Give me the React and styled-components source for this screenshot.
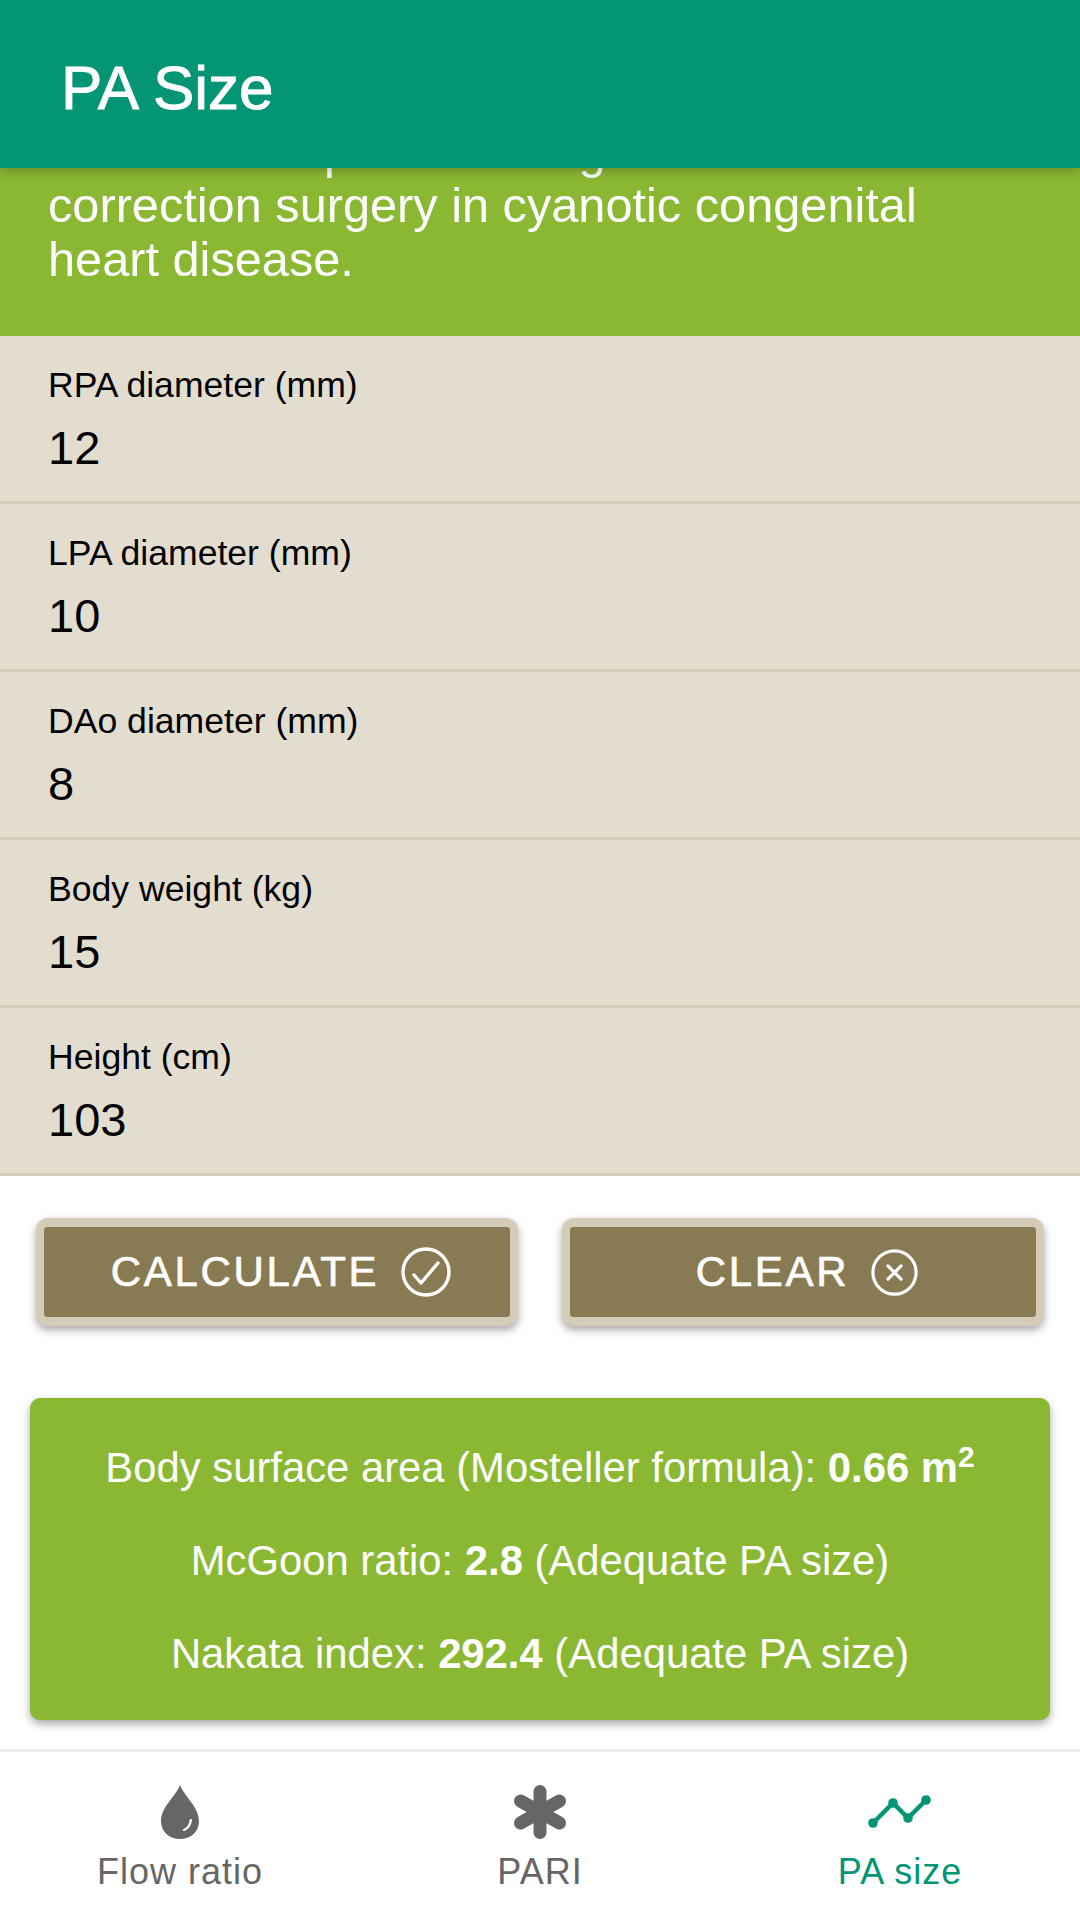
import React from "react";
import styled, { createGlobalStyle } from "styled-components";

const Global = createGlobalStyle`
  html, body { margin: 0; padding: 0; background: #fff; }
  body { font-family: "Liberation Sans", Arial, sans-serif; }
  * { box-sizing: border-box; }
`;
const Page = styled.div`
  width: 1080px; height: 1920px; display: flex; flex-direction: column; overflow: hidden; background: #fff;
`;
const Header = styled.header`
  height: 168px; flex: none; background: #039574; display: flex; align-items: center; padding: 6px 0 0 61px;
  position: relative; z-index: 2; box-shadow: 0 3px 10px rgba(0,0,0,.25);
  color: #fff; font-size: 62px; font-weight: 400; -webkit-text-stroke: 0.9px #fff;
`;
const Intro = styled.section`
  height: 168px; flex: none; background: #8bb833; color: #fff; font-size: 48.7px; line-height: 54px;
  padding: 0 48px 50px; display: flex; flex-direction: column; justify-content: flex-end; overflow: hidden;
`;
const IntroLine = styled.div`
  white-space: nowrap;
`;
const Field = styled.div`
  height: 168px; flex: none; background: #e3ddd0; border-bottom: 3px solid #d3ccb6; padding: 29px 48px 0;
`;
const Label = styled.div`
  font-size: 35.6px; line-height: 40px; color: #000;
`;
const Value = styled.div`
  font-size: 47px; line-height: 54px; color: #000; margin-top: 16px;
`;
const Buttons = styled.div`
  display: flex; justify-content: space-between; padding: 42px 36px 0; flex: none;
`;
const Button = styled.button`
  width: 482px; height: 108px; background: #887a52; border-style: solid; border-color: #d3ccb6;
  border-width: 9px 8px; border-radius: 12px; box-shadow: 0 4px 8px rgba(0,0,0,.35);
  display: flex; align-items: center; justify-content: center; gap: 22px; padding: 0 0 0 8px;
  color: #fff; font: 400 42px "Liberation Sans", sans-serif; letter-spacing: 2.7px; -webkit-text-stroke: 0.7px #fff;
`;
const Result = styled.section`
  margin: 72px 30px 0; height: 322px; flex: none; background: #8bb833; border-radius: 10px;
  box-shadow: 0 4px 8px rgba(0,0,0,.35); color: #fff; font-size: 41.8px;
  display: flex; flex-direction: column; justify-content: center; gap: 46px; align-items: center; padding-top: 2px;
`;
const ResultLine = styled.div`
  line-height: 47px; white-space: nowrap;
`;
const Sup = styled.sup`
  font-size: 30px; line-height: 0; vertical-align: 15px;
`;
const Tabs = styled.nav`
  margin-top: auto; height: 171px; flex: none; border-top: 3px solid #eeeeee; display: grid; grid-template-columns: repeat(3, 1fr);
`;
const Tab = styled.div`
  display: flex; flex-direction: column; align-items: center; padding-top: 30px;
  color: ${p => (p.$active ? "#039574" : "#666666")}; font-size: 36px; letter-spacing: 1px;
`;
const TabIcon = styled.svg`
  width: 60px; height: 60px; display: block; fill: currentColor; overflow: visible;
`;
const TabLabel = styled.div`
  line-height: 40px; margin-top: 10px;
`;
const BtnIcon = styled.svg`
  width: ${p => p.$size}px; height: ${p => p.$size}px; flex: none; fill: none; stroke: #fff; stroke-width: 3.4; stroke-linecap: round; stroke-linejoin: round;
`;

const fields = [
  ["RPA diameter (mm)", "12"],
  ["LPA diameter (mm)", "10"],
  ["DAo diameter (mm)", "8"],
  ["Body weight (kg)", "15"],
  ["Height (cm)", "103"],
];

export default function App() {
  return (
    <Page>
      <Global />
      <Header>PA Size</Header>
      <Intro>
        <IntroLine>selection for patients for gross total</IntroLine>
        <IntroLine>correction surgery in cyanotic congenital</IntroLine>
        <IntroLine>heart disease.</IntroLine>
      </Intro>
      {fields.map(([l, v]) => (
        <Field key={l}>
          <Label>{l}</Label>
          <Value>{v}</Value>
        </Field>
      ))}
      <Buttons>
        <Button>
          CALCULATE
          <BtnIcon $size={50} viewBox="0 0 50 50">
            <circle cx="25" cy="25" r="23" />
            <path d="M13 28l7 8 17-20" />
          </BtnIcon>
        </Button>
        <Button>
          CLEAR
          <BtnIcon $size={47} viewBox="0 0 50 50">
            <circle cx="25" cy="25" r="23" />
            <path d="M18 18l14 14M32 18L18 32" />
          </BtnIcon>
        </Button>
      </Buttons>
      <Result>
        <ResultLine>Body surface area (Mosteller formula): <b>0.66 m<Sup>2</Sup></b></ResultLine>
        <ResultLine>McGoon ratio: <b>2.8</b> (Adequate PA size)</ResultLine>
        <ResultLine>Nakata index: <b>292.4</b> (Adequate PA size)</ResultLine>
      </Result>
      <Tabs>
        <Tab>
          <TabIcon viewBox="0 0 60 60">
            <path fillRule="evenodd" d="M30 3C26 14 11 25 11 39c0 11 8.500 18 19 18s19-7 19-18C49 25 34 14 30 3zM42 38c-.5 5-3 9-8 11-1 .4-1.800-1-.8-1.600 3.800-1.900 6-5 6.500-9.400.2-1.300 2.400-1.300 2.300 0z" />
          </TabIcon>
          <TabLabel>Flow ratio</TabLabel>
        </Tab>
        <Tab>
          <TabIcon viewBox="0 0 60 60">
            <g stroke="currentColor" strokeWidth="13" strokeLinecap="round">
              <line x1="30" y1="9.500" x2="30" y2="50.500" />
              <line x1="10.500" y1="19" x2="49.500" y2="41" />
              <line x1="49.500" y1="19" x2="10.500" y2="41" />
            </g>
          </TabIcon>
          <TabLabel>PARI</TabLabel>
        </Tab>
        <Tab $active>
          <TabIcon viewBox="0 0 60 60">
            <circle cx="3" cy="41" r="4.800" />
            <circle cx="23" cy="21" r="4.800" />
            <circle cx="38" cy="36" r="4.800" />
            <circle cx="56" cy="18" r="4.800" />
            <path d="M3 41L23 21 38 36 56 18" fill="none" stroke="currentColor" strokeWidth="4.500" />
          </TabIcon>
          <TabLabel>PA size</TabLabel>
        </Tab>
      </Tabs>
    </Page>
  );
}
